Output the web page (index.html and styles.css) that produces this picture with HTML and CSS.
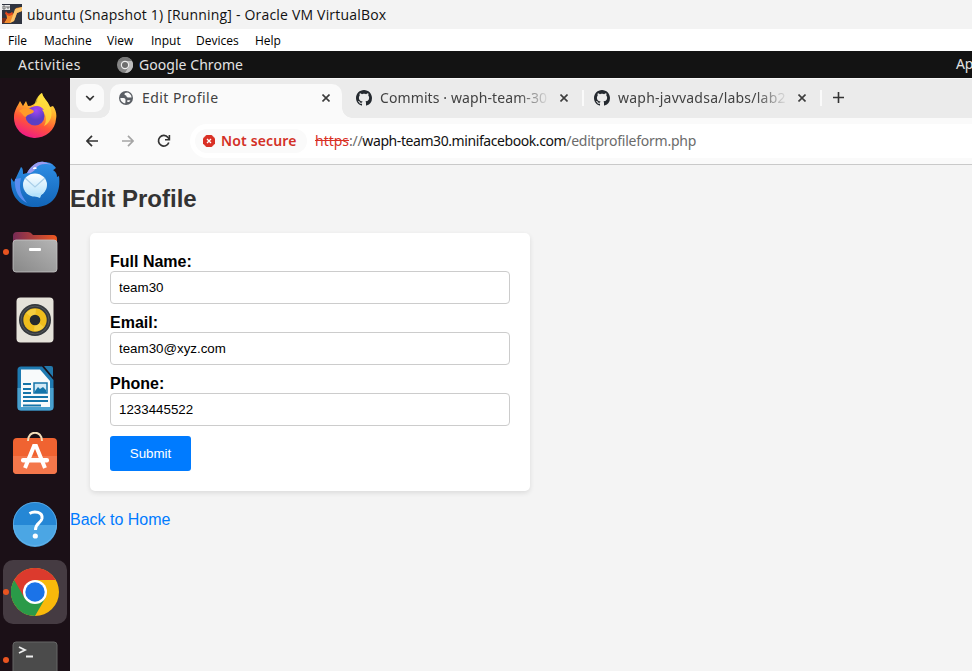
FILE: index.html
```html
<!DOCTYPE html>
<html lang="en">
<head>
<meta charset="utf-8">
<title>Edit Profile</title>
<link rel="stylesheet" href="styles.css">
</head>
<body>
<svg class="defs" width="0" height="0" aria-hidden="true">
  <symbol id="github" viewBox="0 0 16 16"><path fill="#24292f" d="M8 0C3.58 0 0 3.58 0 8c0 3.54 2.29 6.53 5.47 7.59.4.07.55-.17.55-.38 0-.19-.01-.82-.01-1.49-2.01.37-2.53-.49-2.69-.94-.09-.23-.48-.94-.82-1.13-.28-.15-.68-.52-.01-.53.63-.01 1.08.58 1.23.82.72 1.21 1.87.87 2.33.66.07-.52.28-.87.51-1.07-1.78-.2-3.64-.89-3.64-3.95 0-.87.31-1.59.82-2.15-.08-.2-.36-1.02.08-2.12 0 0 .67-.21 2.2.82.64-.18 1.32-.27 2-.27s1.36.09 2 .27c1.53-1.04 2.2-.82 2.2-.82.44 1.1.16 1.92.08 2.12.51.56.82 1.27.82 2.15 0 3.07-1.87 3.75-3.65 3.95.29.25.54.73.54 1.48 0 1.07-.01 1.93-.01 2.2 0 .21.15.46.55.38A8.01 8.01 0 0 0 16 8c0-4.42-3.58-8-8-8z"/></symbol>
  <symbol id="close" viewBox="0 0 8 8"><path d="M.5.5l7 7M7.5.5l-7 7" stroke="#3c3c3c" stroke-width="1.6"/></symbol>
</svg>

<header class="titlebar">
  <svg width="20" height="20" viewBox="0 0 20 20"><rect width="20" height="20" fill="#303440"/><path d="M4 9c2 3 5 3 8 0l2-5 6-1v4l-5 2-3 8-4 2H2l3-5z" fill="#f38b2c"/><path d="M13 5l7-2v4l-5 2-3 8-4 2 3-8z" fill="#fcc56d"/><path d="M4 7c1 3 4 3 6 1l1 1-1 2-3 1-4-2z" fill="#e5481c"/><path d="M0 14h5l-3 5H0z" fill="#7a2d1b"/><path d="M0 1h8v5H0z" fill="#e8e8e8"/><path d="M1 2h2v3H1zM5 2v2h2V2" fill="none" stroke="#555" stroke-width=".8"/></svg>
  <span class="wintitle">ubuntu (Snapshot 1) [Running] - Oracle VM VirtualBox</span>
</header>
<nav class="menubar">
  <span class="m1">File</span><span class="m2">Machine</span><span class="m3">View</span><span class="m4">Input</span><span class="m5">Devices</span><span class="m6">Help</span>
</nav>
<div class="topbar">
  <span class="activities">Activities</span>
  <svg width="16" height="16" viewBox="0 0 16 16"><circle cx="8" cy="8" r="8" fill="#858585"/><path d="M8 16a8 8 0 0 0 7-12H8l3.5 6z" fill="#bdbdbd"/><path d="M1 4a8 8 0 0 1 14 0H8z" fill="#777"/><circle cx="8" cy="8" r="4.2" fill="#eee"/><circle cx="8" cy="8" r="3" fill="#6e6e6e"/></svg>
  <span class="appname">Google Chrome</span>
  <span class="clock">Ap</span>
</div>

<div class="desktop">
  <aside class="dock">
    <div class="item i1"><svg width="44" height="46" viewBox="0 0 44 46">
      <defs><linearGradient id="ff" x1=".7" y1="0" x2=".3" y2="1"><stop offset="0" stop-color="#fff04a"/><stop offset=".35" stop-color="#ffae2c"/><stop offset=".65" stop-color="#ff5638"/><stop offset="1" stop-color="#ef168c"/></linearGradient><radialGradient id="fp" cx=".55" cy=".2"><stop offset="0" stop-color="#a247f5"/><stop offset="1" stop-color="#5c3fc4"/></radialGradient></defs>
      <path d="M7 8l3 5 3-5 2 5c4 0 6-2 9-4 0-4 2-7 5-9 1 5 6 8 8 14l3-1c3 4 4 9 3 13a21 20 0 0 1-42-2c0-6 3-10 6-16z" fill="url(#ff)"/><path d="M21 13c2-7 4-11 8-13 1 5 6 8 8 14 4 8 0 16-6 19 5-8 0-18-10-20z" fill="#ffe03e" opacity=".75"/><circle cx="22" cy="23" r="9.5" fill="url(#fp)"/><path d="M6 18c5-4 11-3 15 0-1 4-6 2-8 6-2 0-3-3-7-6z" fill="#ff9b28"/><path d="M20 14c4-2 8-1 11 3l-4-1 4 5c-3-4-7-5-11-7z" fill="#9842ea"/></svg></div>
    <div class="item i2"><svg width="50" height="47" viewBox="0 0 50 47">
      <defs><linearGradient id="tb" x1="0" y1="0" x2="0" y2="1"><stop offset="0" stop-color="#2e8ee5"/><stop offset="1" stop-color="#1265b8"/></linearGradient><linearGradient id="env" x1="0" y1="0" x2="0" y2="1"><stop offset="0" stop-color="#fff"/><stop offset="1" stop-color="#b4e2fb"/></linearGradient></defs>
      <path d="M1 17l3 4 7-15c2 1 2 4 2 7l4-1C22 4 27 0 34 1c6 0 9 2 12 6-2 1-2 2-3 2 4 3 4 5 4 7l2-1c2 15-4 31-24 31C11 46 0 37 1 17z" fill="url(#tb)"/><path d="M5 18c-1 12 4 20 12 24-5-7-9-13-6-25z" fill="#5a8df1"/><path d="M17 12C22 4 27 0 34 1l9 3c-9-2-14-1-17 3-2 4-6 6-9 5z" fill="#9a9bf0"/><ellipse cx="25" cy="24" rx="12" ry="11.500" fill="url(#env)"/><path d="M15 17l10 9 10-9" fill="none" stroke="#a9cfe9" stroke-width="1.200"/><path d="M19 33l11 4 2-5z" fill="#b4e2fb"/><path d="M23 7l2-1 2 1-1 1h-3z" fill="#fff"/></svg></div>
    <div class="item i3"><i class="dot"></i><svg width="46" height="41" viewBox="0 0 46 41">
      <defs><linearGradient id="fo"><stop offset="0" stop-color="#762a55"/><stop offset="1" stop-color="#ef5820"/></linearGradient><linearGradient id="gr" x1="0" y1="1" x2="1" y2="0"><stop stop-color="#888"/><stop offset="1" stop-color="#b5b5b5"/></linearGradient></defs>
      <path d="M1 4q0-4 4-4h11q3 0 5 3h20q4 0 4 4v10H1z" fill="url(#fo)"/><rect x="1" y="8" width="44" height="32" rx="3" fill="url(#gr)" stroke="#c5c5c5" stroke-width=".8"/><rect x="17" y="16" width="12" height="3" rx="1" fill="#fff"/></svg></div>
    <div class="item i4"><svg width="38" height="46" viewBox="0 0 38 46"><rect x=".5" y=".5" width="37" height="45" rx="4" fill="#e5e2da"/><circle cx="19" cy="23" r="16" fill="#34383c"/><circle cx="19" cy="23" r="14" fill="none" stroke="#55585c"/><circle cx="19" cy="23" r="11.7" fill="#efbd1c"/><path d="M19 23l-9-7a11.7 11.7 0 0 1 10-4zM19 23l9 7a11.7 11.7 0 0 1-10 4z" fill="#f8d957" opacity=".6"/><circle cx="19" cy="23" r="5.3" fill="#262a2d"/></svg></div>
    <div class="item i5"><svg width="37" height="45" viewBox="0 0 37 45"><path d="M4 .5h21L36.500 14v27q0 3.500-4 3.500H4Q.5 44.500.5 41V4Q.5.5 4 .5z" fill="#1e7ab1"/><path d="M.5 22h36v19q0 3.500-4 3.500H4Q.5 44.500.5 41z" fill="#49a0ce"/><path d="M4 3.500h19L33 15v26H4z" fill="#f8fafb"/><path d="M27 0h7q2 0 2 2v9z" fill="#2379ac"/><path d="M6 18h8M6 23h8M6 27h8M6 31h25M6 35h25M6 39.500h18" stroke="#1474a9" stroke-width="2"/><rect x="17" y="17" width="13" height="10" fill="#d2eaf7" stroke="#1474a9" stroke-width="1.500"/><path d="M18 25l3-4 2 2 3-2 3 3v3H18z" fill="#1474a9"/></svg></div>
    <div class="item i6"><svg width="46" height="43" viewBox="0 0 46 43"><rect x="1" y="6" width="44" height="36" rx="4" fill="#f06331"/><path d="M1 24h44v14q0 4-4 4H5q-4 0-4-4z" fill="#f4774b"/><path d="M16 9c0-11 14-11 14 0" fill="none" stroke="#f5dfba" stroke-width="2"/><path d="M13 36l9-22h2l9 22" fill="none" stroke="#fff" stroke-width="4"/><rect x="9" y="26" width="28" height="4.500" rx="2" fill="#fff"/></svg></div>
    <div class="item i7"><svg width="46" height="46" viewBox="0 0 46 46"><circle cx="23" cy="23" r="22" fill="#2587d5"/><path d="M1 24h44a22 22 0 0 1-44 0z" fill="#4ba6e4"/><circle cx="23" cy="23" r="21.600" fill="none" stroke="#6bb5e9" stroke-width=".7"/><path d="M17.500 12.500c5-3 13.500-1.500 12.500 5-1 5-6.500 4.500-6.500 11.500" fill="none" stroke="#fff" stroke-width="3"/><circle cx="23.300" cy="35" r="2.600" fill="#fff"/></svg></div>
    <div class="item i8"><i class="dot"></i><svg width="48" height="48" viewBox="0 0 48 48"><circle cx="24" cy="24" r="24" fill="#f9b90b"/><path d="M24 24L3.200 12A24 24 0 0 0 24 48l10.400-18z" fill="#2a9a48"/><path d="M3.200 12a24 24 0 0 1 41.600 0H24L13.600 30z" fill="#dc3a2d"/><circle cx="24" cy="24" r="12" fill="#fff"/><circle cx="24" cy="24" r="9.700" fill="#1b73e8"/></svg></div>
    <div class="item i9"><i class="dot"></i><svg width="46" height="32" viewBox="0 0 46 32"><rect x="1" y="1" width="44" height="40" rx="3" fill="#4b4b4b" stroke="#666"/><path d="M7 6l6 3-6 3M14 15.500h7" fill="none" stroke="#eee" stroke-width="1.800"/></svg></div>
  </aside>

  <div class="browser">
    <div class="tabstrip">
      <div class="search"><svg width="10" height="6" viewBox="0 0 10 6"><path d="M1.200 1L5 4.700 8.800 1" fill="none" stroke="#333" stroke-width="1.700"/></svg></div>
      <div class="tab active"><svg width="14" height="14" viewBox="0 0 14 14"><circle cx="7" cy="7" r="7" fill="#5b5f65"/><path d="M1.300 7h3.200c1.300 0 2 .8 2 2v1.300l-.3 2.200C3.300 12 1.300 9.800 1.300 7zM8.200 1.600C6.500 1.700 5.300 2.400 5.500 3.600c.2 1 1.700.7 2 1.600.2 1 1.200 1.300 2.100 1.300h3c-.2-2.600-2-4.500-4.400-4.900zM8.300 9.300h3.200l-1.300 1.600H8.300z" fill="#fafafa"/></svg><span class="label edit">Edit Profile</span><svg class="x" width="8" height="8"><use href="#close"/></svg></div>
      <div class="tab second"><svg width="16" height="16"><use href="#github"/></svg><span class="label commits">Commits · waph-team-30</span><svg class="x" width="8" height="8"><use href="#close"/></svg></div>
      <i class="sep"></i>
      <div class="tab third"><svg width="16" height="16"><use href="#github"/></svg><span class="label lab">waph-javvadsa/labs/lab2</span><svg class="x" width="8" height="8"><use href="#close"/></svg></div>
      <i class="sep"></i>
      <svg class="plus" width="11" height="11" viewBox="0 0 11 11"><path d="M5.500 0v11M0 5.500h11" stroke="#333" stroke-width="1.600"/></svg>
    </div>
    <div class="toolbar">
      <svg class="back" width="12" height="12" viewBox="0 0 12 12"><path d="M12 6H1M6 .8L.9 6 6 11.200" fill="none" stroke="#333" stroke-width="1.700"/></svg>
      <svg class="fwd" width="12" height="12" viewBox="0 0 12 12"><path d="M0 6h11M6 .8L11.100 6 6 11.200" fill="none" stroke="#a5a5a5" stroke-width="1.700"/></svg>
      <svg class="reload" width="14" height="14" viewBox="0 0 14 14"><path d="M11.800 8.500A5.300 5.300 0 1 1 11 3.500l1.500 1.700" fill="none" stroke="#333" stroke-width="1.700"/><path d="M12.400 1v4.700H8" fill="none" stroke="#333" stroke-width="1.600"/></svg>
      <div class="omnibox">
        <div class="chip"><svg width="12" height="12" viewBox="0 0 12 12"><path d="M3.500 0h5L12 3.500v5L8.500 12h-5L0 8.500v-5z" fill="#d93025" stroke="#d93025" stroke-linejoin="round" stroke-width=".3"/><path d="M4 4l4 4M8 4L4 8" stroke="#fff" stroke-width="1.300"/></svg><span class="notsecure">Not secure</span></div>
        <span class="url"><span class="proto">https</span><span class="slashes">://</span><span class="host">waph-team30.minifacebook.com</span><span class="path">/editprofileform.php</span></span>
      </div>
    </div>
    <main class="page">
      <h2>Edit Profile</h2>
      <form>
        <label for="name">Full Name:</label>
        <input id="name" type="text" value="team30">
        <label for="email">Email:</label>
        <input id="email" type="text" value="team30@xyz.com">
        <label for="phone">Phone:</label>
        <input id="phone" type="text" value="1233445522">
        <button type="button">Submit</button>
      </form>
      <a href="#">Back to Home</a>
    </main>
  </div>
</div>
</body>
</html>
```
FILE: styles.css
```css
* { box-sizing: border-box; }
body { margin: 0; width: 972px; height: 671px; overflow: hidden; display: flex; flex-direction: column; font-family: "Noto Sans", sans-serif; }
svg { display: block; flex: none; }
.defs { display: none; }
span { white-space: pre; }

.titlebar { height: 29px; background: #f3f3f3; display: flex; align-items: center; padding: 0 0 1px 2px; gap: 5px; flex: none; color: #111; }
.wintitle { font: 14px "Open Sans", sans-serif; letter-spacing: .19px; padding-top: 1px; }
.menubar { height: 22px; background: #fff; display: flex; align-items: center; padding-left: 8px; flex: none; font: 12px "Open Sans", sans-serif; color: #000; }
.menubar span { flex: none; }
.m1 { width: 36px; }
.m2 { width: 63px; }
.m3 { width: 44px; }
.m4 { width: 45px; }
.m5 { width: 59px; }

.topbar { height: 27px; background: #131313; color: #e3e3e3; display: flex; align-items: center; padding-left: 18px; flex: none; font-size: 14px; overflow: hidden; }
.topbar span { flex: none; }
.activities { width: 99px; letter-spacing: .45px; }
.appname { width: 823px; padding-left: 6px; letter-spacing: .05px; }
.clock { margin-top: -2px; letter-spacing: -.3px; }

.desktop { flex: 1; display: flex; min-height: 0; }
.dock { width: 70px; flex: none; background: #1b1017; overflow: hidden; padding-top: 6px; }
.item { position: relative; width: 64px; height: 64px; margin: 0 0 4px 3px; display: flex; align-items: center; justify-content: center; border-radius: 10px; }
.i6 { padding-bottom: 5px; }
.i8 { background: #453b42; }
.i9 { align-items: flex-start; padding-top: 13px; }
.dot { position: absolute; left: 0; top: 29px; width: 6px; height: 6px; border-radius: 50%; background: #e95420; }

.browser { flex: 1; min-width: 0; background: #f4f4f4; display: flex; flex-direction: column; }
.tabstrip { height: 40px; flex: none; border-top: 1px solid #f8f8f8; background: #ebebeb; display: flex; align-items: center; padding-left: 6px; font-size: 14px; color: #424242; }
.search { width: 28px; height: 28px; border-radius: 9px; background: #fafafa; display: flex; align-items: center; justify-content: center; margin: 0 6px 1px 0; }
.tab { display: flex; align-items: center; height: 34px; flex: none; padding-bottom: 7px; }
.active { width: 232px; background: #fafafa; border-radius: 10px 10px 0 0; align-self: flex-end; padding-left: 9px; position: relative; }
.active::before, .active::after { content: ""; position: absolute; bottom: 0; width: 10px; height: 10px; }
.active::before { left: -10px; background: radial-gradient(circle at 0 0, transparent 9.5px, #fafafa 10px); }
.active::after { right: -10px; background: radial-gradient(circle at 100% 0, transparent 9.5px, #fafafa 10px); }
.second, .third { align-self: flex-end; }
.second { width: 240px; padding-left: 14px; }
.third { width: 237px; padding-left: 10px; }
.label { flex: none; overflow: hidden; }
.edit { width: 180px; margin-left: 9px; letter-spacing: .45px; }
.commits, .lab { width: 168px; margin-left: 8px; letter-spacing: .1px; -webkit-mask-image: linear-gradient(90deg, #000 138px, transparent 170px); mask-image: linear-gradient(90deg, #000 138px, transparent 170px); }
.lab { letter-spacing: .22px; }
.x { margin-left: 12px; }
.active .x { margin-left: 0; }
.sep { width: 2px; height: 16px; flex: none; background: #fafafa; margin-bottom: 2px; }
.third + .sep { margin-left: -1px; }
.plus { margin: 0 0 2px 11px; }

.toolbar { height: 47px; flex: none; background: #fafafa; border-bottom: 1px solid #c9c9c9; display: flex; align-items: center; padding-left: 16px; }
.fwd { margin-left: 24px; }
.reload { margin-left: 23px; }
.omnibox { margin-left: 19px; flex: 1; min-width: 0; height: 34px; background: #fff; border-radius: 17px 0 0 17px; display: flex; align-items: center; padding-left: 5px; font-size: 14px; }
.chip { width: 112px; height: 24px; border-radius: 12px; background: #fafafa; color: #d33026; display: flex; align-items: center; padding-left: 8px; flex: none; font-weight: 600; }
.notsecure { margin: -2px 0 0 6px; letter-spacing: .15px; }
.url { margin: -2px 0 0 8px; display: flex; color: #6b6b6b; }
.proto { color: #d93025; text-decoration: line-through; }
.slashes { letter-spacing: -.3px; }
.host { color: #111; letter-spacing: -.42px; }
.path { letter-spacing: -.24px; }

.page { padding-top: 20px; font: 16px "Liberation Sans", sans-serif; }
h2 { margin: 0 0 21px; font-size: 24px; line-height: 27px; color: #333; }
form { width: 440px; height: 258px; margin: 0 0 20px 20px; padding: 20px; background: #fff; border-radius: 5px; box-shadow: 0 2px 5px rgba(0,0,0,.1); }
label { display: block; line-height: 18px; font-weight: bold; color: #000; }
input { display: block; width: 100%; height: 33px; margin: 0 0 10px; padding: 8px; border: 1px solid #ccc; border-radius: 4px; font: 13.333px "Liberation Sans", sans-serif; color: #000; background: #fff; }
button { display: block; width: 81px; height: 35px; padding: 0; border: 0; border-radius: 3px; background: #007bff; color: #fff; font: 13.333px "Liberation Sans", sans-serif; }
a { color: #007bff; text-decoration: none; line-height: 18px; }
```
